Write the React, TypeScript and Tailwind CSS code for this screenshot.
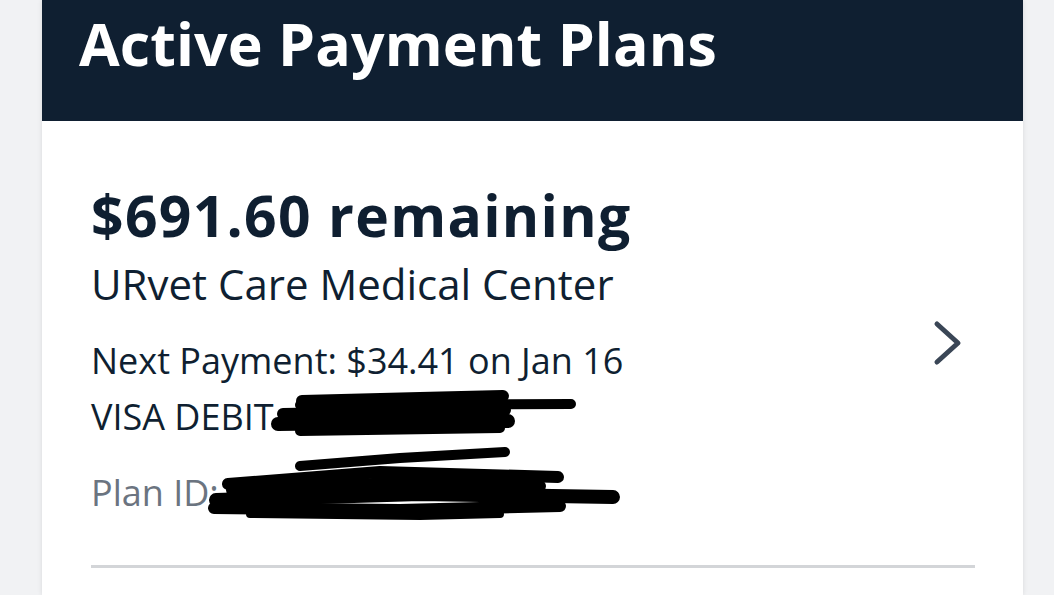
import React from "react";

export default function App() {
  return (
    <div className="relative w-[1054px] h-[595px] overflow-hidden bg-[#f1f2f4] pl-[42px]" style={{ fontFamily: '"Open Sans", sans-serif' }}>
      <div className="w-[981px] h-full flex flex-col bg-white shadow-[0_0_5px_rgba(0,0,0,0.10)]">
        <div className="h-[121px] shrink-0 bg-[#0f1f31] pl-[37px] pt-[3px]">
          <h1 className="text-white font-bold text-[59px] leading-[80px] tracking-[0.1px]">Active Payment Plans</h1>
        </div>
        <div className="flex-1 pl-[49px] pr-[48px] pt-[64px]">
          <div className="flex items-start">
            <div className="flex-1 flex flex-col text-[#0f1f31]">
              <div className="font-bold text-[57px] leading-[60px] tracking-[1.3px]">$691.60 remaining</div>
              <div className="text-[42px] leading-[60px] mt-[9px]">URvet Care Medical Center</div>
              <div className="text-[36px] leading-[56px] mt-[19px]">Next Payment: $34.41 on Jan 16</div>
              <div className="text-[36px] leading-[56px]">VISA DEBIT</div>
              <div className="text-[36px] leading-[56px] mt-[20px] text-[#6b7480]">Plan ID:</div>
            </div>
            <svg className="w-[30px] h-[48px] mt-[134px] mr-[12px]" viewBox="0 0 30 48" fill="none">
              <path d="M4 5 L25 24 L4 43" stroke="#3a4656" strokeWidth="5" strokeLinecap="round" strokeLinejoin="round" />
            </svg>
          </div>
          <div className="mt-[44px] h-[3px] bg-[#d3d5d8]" />
        </div>
      </div>
      <svg className="absolute left-0 top-0 w-[1054px] h-[595px] pointer-events-none" viewBox="0 0 1054 595" fill="none">
        <g stroke="#000" strokeLinecap="round" strokeLinejoin="round">
          <path d="M302 401 L420 398 L503 396" strokeWidth="12" />
          <path d="M300 405 L571 404" strokeWidth="10" />
          <path d="M283 414 L505 410" strokeWidth="12" />
          <path d="M278 424 L508 421" strokeWidth="14" />
          <path d="M300 431 L500 428" strokeWidth="10" />
          <path d="M300 466 L400 458 L505 452" strokeWidth="10" />
          <path d="M228 484 L380 472 L558 477" strokeWidth="12" />
          <path d="M232 490 L420 482 L540 486" strokeWidth="12" />
          <path d="M216 500 L420 494 L613 497" strokeWidth="14" />
          <path d="M214 508 L400 510 L560 506" strokeWidth="12" />
          <path d="M250 514 L420 516 L500 514" strokeWidth="8" />
        </g>
      </svg>
    </div>
  );
}
